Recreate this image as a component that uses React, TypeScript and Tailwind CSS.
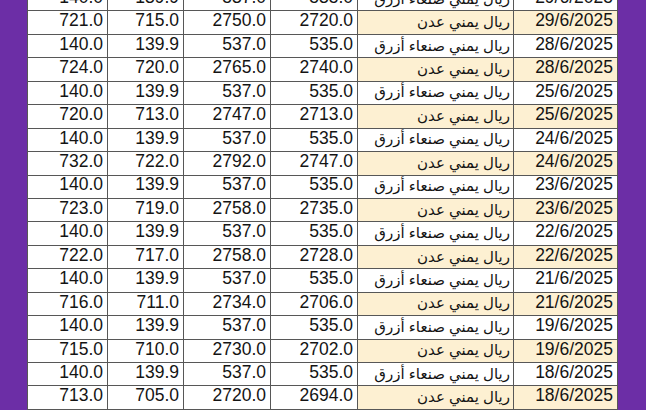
import React from 'react';

type Row = {
  sell: string;
  buy: string;
  sarSell: string;
  sarBuy: string;
  aden: boolean;
  date: string;
};

const days = [
  { date: '29/6/2025', v: ['721.0', '715.0', '2750.0', '2720.0'] },
  { date: '28/6/2025', v: ['724.0', '720.0', '2765.0', '2740.0'] },
  { date: '25/6/2025', v: ['720.0', '713.0', '2747.0', '2713.0'] },
  { date: '24/6/2025', v: ['732.0', '722.0', '2792.0', '2747.0'] },
  { date: '23/6/2025', v: ['723.0', '719.0', '2758.0', '2735.0'] },
  { date: '22/6/2025', v: ['722.0', '717.0', '2758.0', '2728.0'] },
  { date: '21/6/2025', v: ['716.0', '711.0', '2734.0', '2706.0'] },
  { date: '19/6/2025', v: ['715.0', '710.0', '2730.0', '2702.0'] },
  { date: '18/6/2025', v: ['713.0', '705.0', '2720.0', '2694.0'] },
];

const rows: Row[] = days.flatMap((d) => [
  { sell: '140.0', buy: '139.9', sarSell: '537.0', sarBuy: '535.0', aden: false, date: d.date },
  { sell: d.v[0], buy: d.v[1], sarSell: d.v[2], sarBuy: d.v[3], aden: true, date: d.date },
]);

const num = 'border-[1.5px] border-[#575757] bg-white pr-[4px] pb-[3px] text-right';

export default function App() {
  return (
    <div
      className="flex h-[410px] w-[646px] overflow-hidden bg-[#6c2ea6] pl-[27px] pr-[29px]"
      style={{ fontFamily: '"Liberation Sans", Arial, "DejaVu Sans", sans-serif' }}
    >
      <table className="-mt-[13px] h-fit w-[590px] table-fixed border-collapse text-[17.5px] leading-none text-[#141414]">
        <colgroup>
          <col className="w-[80px]" />
          <col className="w-[76px]" />
          <col className="w-[87px]" />
          <col className="w-[87px]" />
          <col className="w-[156px]" />
          <col className="w-[104px]" />
        </colgroup>
        <tbody>
          {rows.map((r, i) => (
            <tr key={i} className="h-[23.45px]">
              <td className={num}>{r.sell}</td>
              <td className={num}>{r.buy}</td>
              <td className={num}>{r.sarSell}</td>
              <td className={num}>{r.sarBuy}</td>
              <td
                dir="rtl"
                className={`border-[1.5px] border-[#575757] pr-[3px] pb-[2px] text-right text-[15px] ${
                  r.aden ? 'bg-[#fdf0d2]' : 'bg-white'
                }`}
              >
                {r.aden ? 'ريال يمني عدن' : 'ريال يمني صنعاء أزرق'}
              </td>
              <td
                className={`border-[1.5px] border-[#575757] pr-[4px] pb-[3px] text-right ${
                  r.aden ? 'bg-[#fdf0d2]' : 'bg-white'
                }`}
              >
                {r.date}
              </td>
            </tr>
          ))}
        </tbody>
      </table>
    </div>
  );
}
